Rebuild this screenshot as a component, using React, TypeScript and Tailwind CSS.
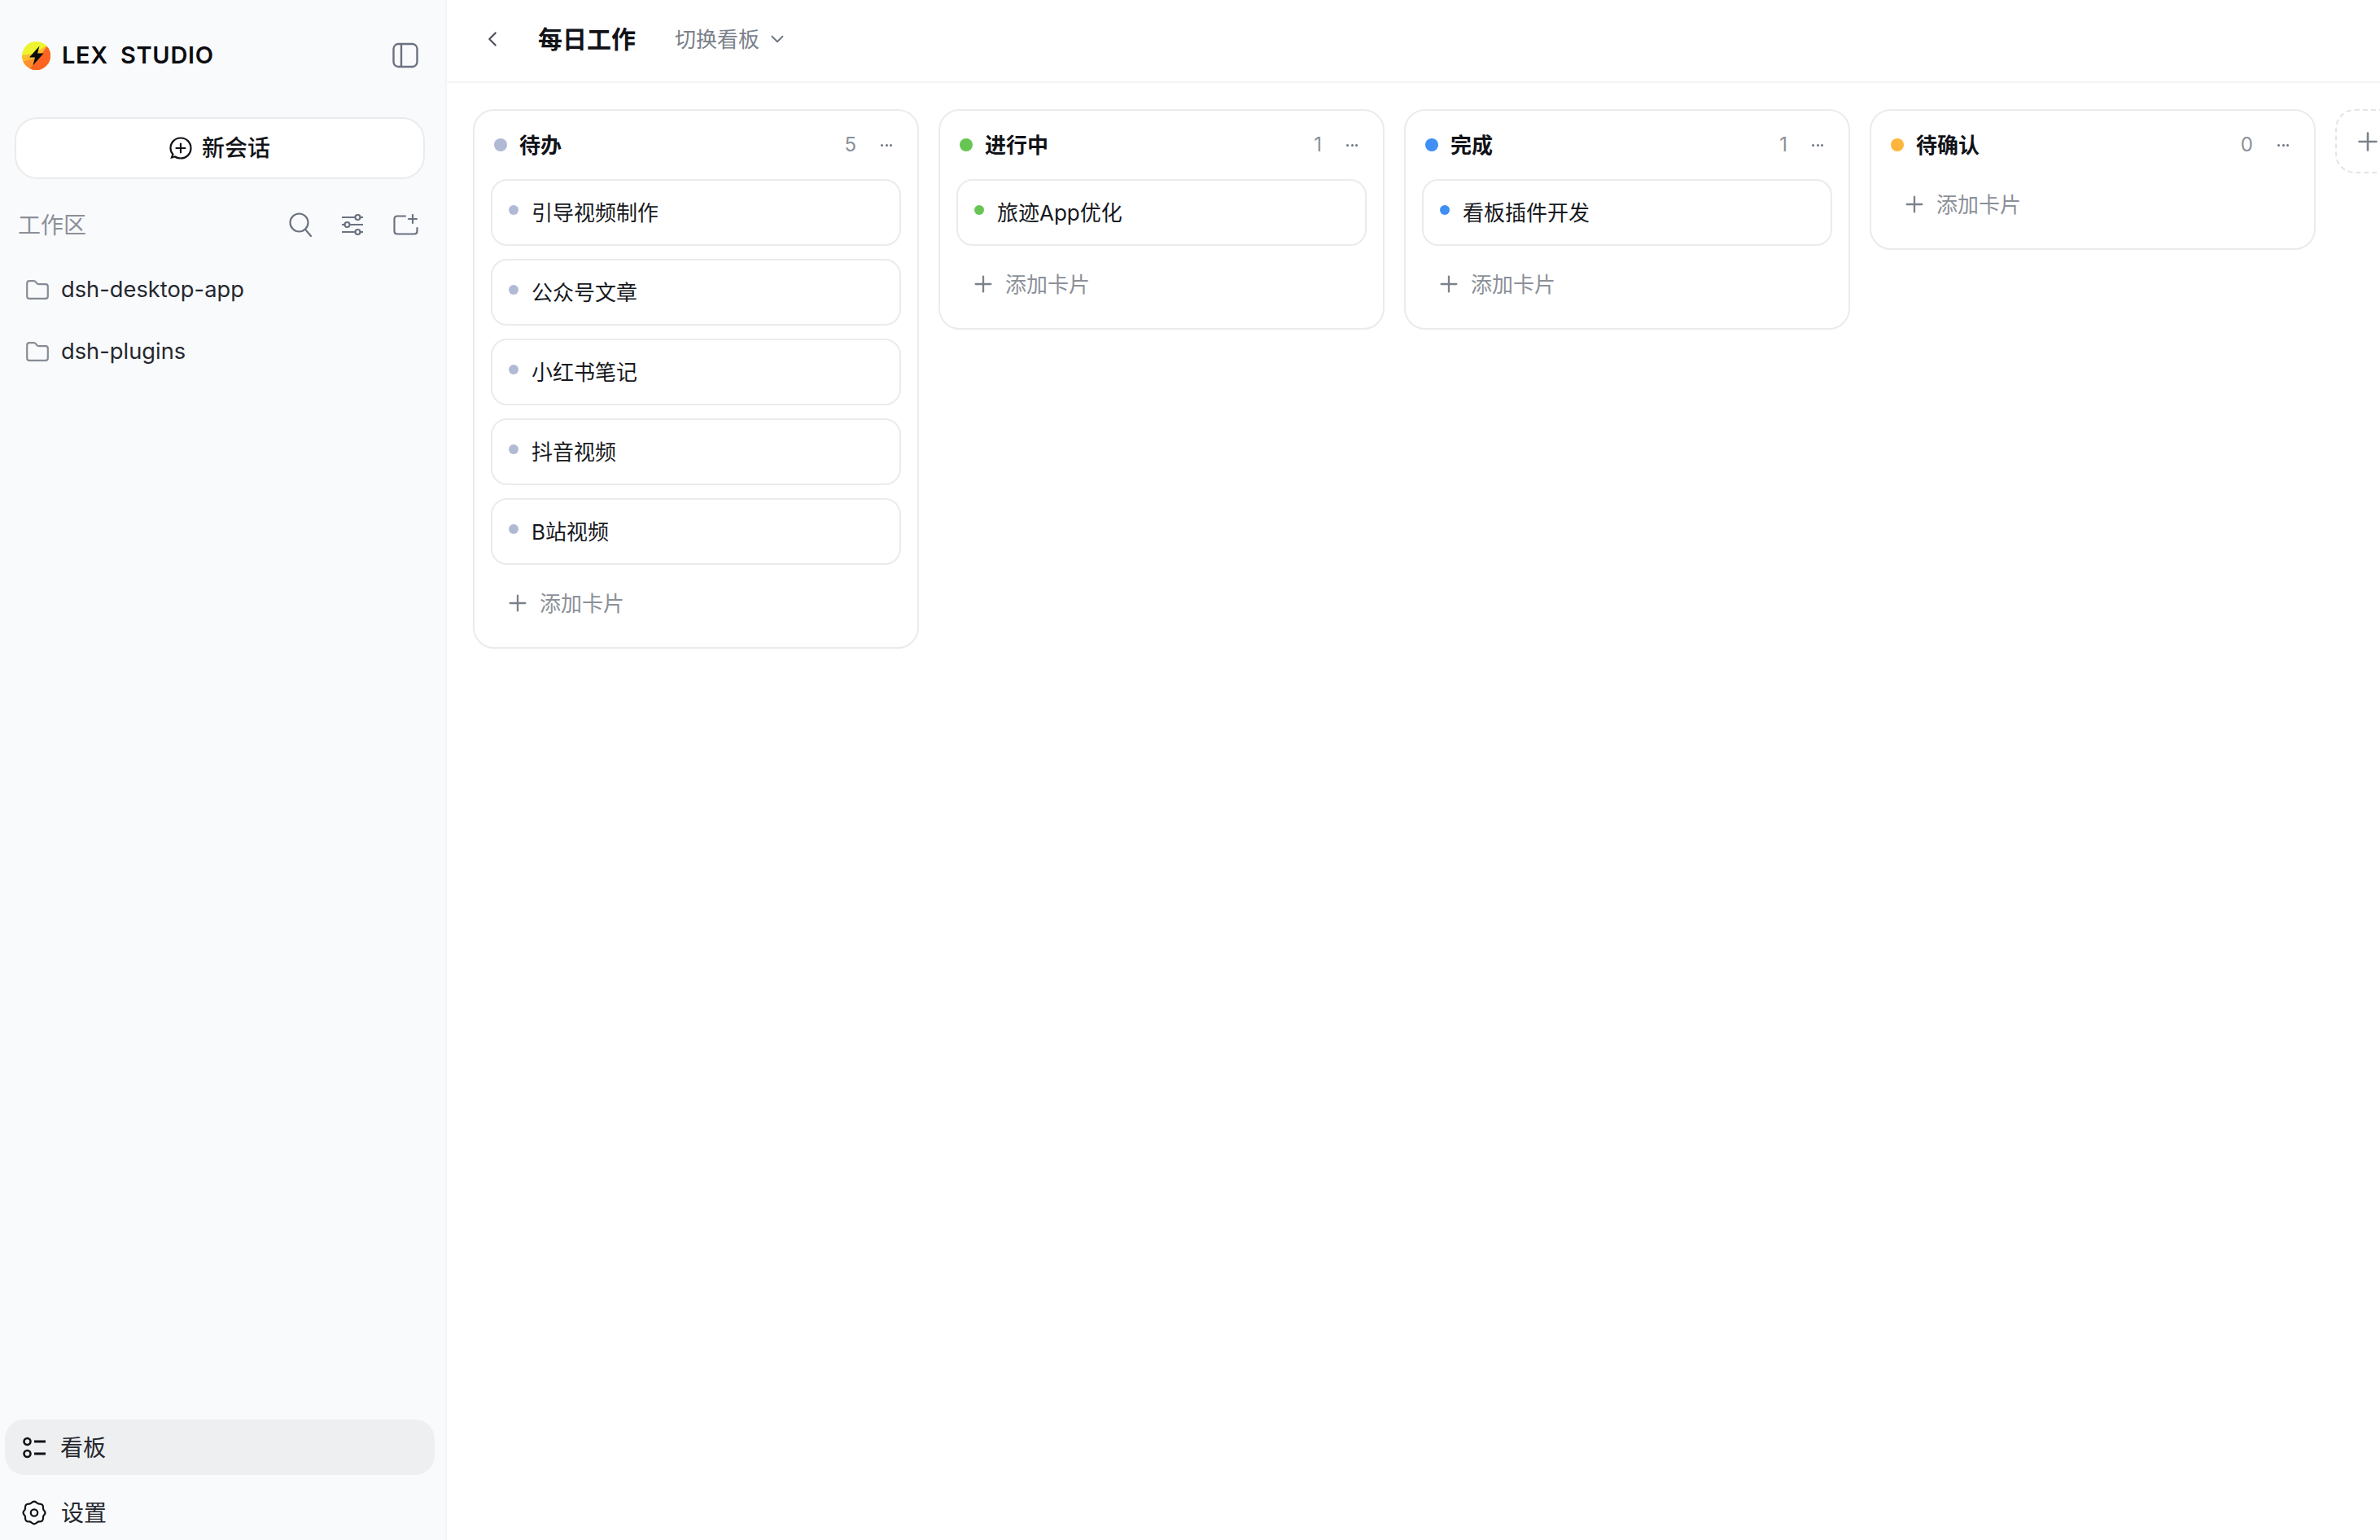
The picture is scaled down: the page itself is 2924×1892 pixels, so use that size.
import { ChevronDown, ChevronLeft, Plus } from "lucide-react";

interface Board {
  title: string;
  count: number;
  dot: string;
  cards: string[];
}

const boards: Board[] = [
  {
    title: "待办",
    count: 5,
    dot: "bg-[#b0bad4]",
    cards: ["引导视频制作", "公众号文章", "小红书笔记", "抖音视频", "B站视频"],
  },
  { title: "进行中", count: 1, dot: "bg-[#67c554]", cards: ["旅迹App优化"] },
  { title: "完成", count: 1, dot: "bg-[#3f8ff5]", cards: ["看板插件开发"] },
  { title: "待确认", count: 0, dot: "bg-[#fdb63b]", cards: [] },
];

function Logo() {
  return (
    <svg width="35" height="35" viewBox="0 0 35 35" className="shrink-0">
      <defs>
        <clipPath id="logo-clip">
          <circle cx="17.5" cy="17.5" r="17.5" />
        </clipPath>
      </defs>
      <g clipPath="url(#logo-clip)">
        <rect width="35" height="35" fill="#eef530" />
        <path d="M0 17 L14 15 L35 2 V35 H0 Z" fill="#fdbb2d" />
        <path d="M0 25 L16 21 L35 6 V35 H0 Z" fill="#fe8f2c" />
        <path d="M8 35 L18 25 L31 5 L35 8 V35 Z" fill="#fd6421" />
      </g>
      <path d="M21.5 5.5 L9 19.5 H16 L13.5 29.5 L26.5 14.5 H19 Z" fill="#0b0b0b" />
    </svg>
  );
}

function PanelIcon() {
  return (
    <svg width="32" height="32" viewBox="0 0 32 32" fill="none" stroke="#6b7280" strokeWidth="2.4">
      <rect x="1.5" y="2" width="29" height="28" rx="6" />
      <path d="M11 2 V30" />
    </svg>
  );
}

function NewChatIcon() {
  return (
    <svg width="28" height="28" viewBox="0 0 28 28" fill="none" stroke="#111318" strokeWidth="2.2" strokeLinecap="round">
      <path d="M7 24.5 C9 26 12 26.5 14 26.5 C21 26.5 26.5 21 26.5 14 C26.5 7 21 1.5 14 1.5 C7 1.5 1.5 7 1.5 14 C1.5 17 2.5 19.5 4.5 21.5 L3 25.5 L7 24.5" />
      <path d="M14 8.5 V19.5 M8.5 14 H19.5" />
    </svg>
  );
}

function SearchIcon() {
  return (
    <svg width="28" height="30" viewBox="0 0 28 30" fill="none" stroke="#6b7280" strokeWidth="2.2" strokeLinecap="round">
      <circle cx="12.5" cy="12.5" r="11" />
      <path d="M21 22 L27 29" />
    </svg>
  );
}

function SlidersIcon() {
  return (
    <svg width="26" height="26" viewBox="0 0 26 26" fill="none" stroke="#6b7280" strokeWidth="2.2" strokeLinecap="round">
      <path d="M0.5 4 H16 M22.5 4 H25.5 M0.5 13 H3.5 M10 13 H25.5 M0.5 22 H16 M22.5 22 H25.5" />
      <circle cx="19.5" cy="4" r="3" />
      <circle cx="6.5" cy="13" r="3" />
      <circle cx="19.5" cy="22" r="3" />
    </svg>
  );
}

function FolderPlusIcon() {
  return (
    <svg width="31" height="26" viewBox="0 0 31 26" fill="none" stroke="#6b7280" strokeWidth="2.2" strokeLinecap="round" strokeLinejoin="round">
      <path d="M15 2.5 H5 Q1.5 2.5 1.5 6 V21 Q1.5 24.5 5 24.5 H26 Q29.5 24.5 29.5 21 V17" />
      <path d="M24 1 V11 M19 6 H29" />
    </svg>
  );
}

function FolderIcon() {
  return (
    <svg width="28" height="24" viewBox="0 0 28 24" fill="none" stroke="#868c96" strokeWidth="2.2" strokeLinejoin="round" className="shrink-0">
      <path d="M1.2 4 Q1.2 1.2 4 1.2 H9.5 Q11 1.2 12 2.4 L13.5 4.2 Q14.5 5.2 16 5.2 H24 Q26.8 5.2 26.8 8 V20 Q26.8 22.8 24 22.8 H4 Q1.2 22.8 1.2 20 Z" />
    </svg>
  );
}

function ListIcon() {
  return (
    <svg width="28" height="27" viewBox="0 0 28 27" fill="none" stroke="#111318" strokeWidth="2.6" className="shrink-0">
      <circle cx="5.5" cy="6" r="4" />
      <circle cx="5.5" cy="21" r="4" />
      <path d="M14 6 H28 M14 21 H28" strokeWidth="3" />
    </svg>
  );
}

function GearIcon() {
  return (
    <svg width="30" height="31" viewBox="0 0 30 31" fill="none" stroke="#111318" strokeWidth="2.2" strokeLinejoin="round" className="shrink-0">
      <path d="M11.5 3.5 Q15 0 18.5 3.5 Q19.8 4.8 21.5 4.6 Q26.3 4.6 26 9.5 Q25.8 11.2 27 12.5 Q30 15.5 27 18.5 Q25.8 19.8 26 21.5 Q26.3 26.4 21.5 26.4 Q19.8 26.2 18.5 27.5 Q15 31 11.5 27.5 Q10.2 26.2 8.5 26.4 Q3.7 26.4 4 21.5 Q4.2 19.8 3 18.5 Q0 15.5 3 12.5 Q4.2 11.2 4 9.5 Q3.7 4.6 8.5 4.6 Q10.2 4.8 11.5 3.5 Z" />
      <circle cx="15" cy="15.5" r="4.2" />
    </svg>
  );
}

function KanbanColumn({ board }: { board: Board }) {
  return (
    <div className="w-[548px] shrink-0 self-start rounded-[26px] border-2 border-[#ebebed] bg-white pb-[23px] pl-[20px] pr-[20px]">
      <div className="flex h-[84px] items-center pl-[4px] pr-[11px]">
        <span className={`h-[16px] w-[16px] rounded-full ${board.dot}`} />
        <span className="ml-[15px] text-[26px] font-semibold text-[#111318]">{board.title}</span>
        <span className="ml-auto text-[24px] text-[#8b9098]">{board.count}</span>
        <div className="ml-[30px] flex w-[14px] justify-between">
          <span className="h-[3px] w-[3px] rounded-full bg-[#6b7280]" />
          <span className="h-[3px] w-[3px] rounded-full bg-[#6b7280]" />
          <span className="h-[3px] w-[3px] rounded-full bg-[#6b7280]" />
        </div>
      </div>
      {board.cards.map((card) => (
        <div
          key={card}
          className="mb-4 flex h-[82px] items-start rounded-[20px] border-2 border-[#ebebed] bg-white px-[20px] py-[19px]"
        >
          <span className={`mt-[11px] h-[12px] w-[12px] shrink-0 rounded-full ${board.dot}`} />
          <span className="ml-[16px] text-[26px] leading-[41px] text-[#17191e]">{card}</span>
        </div>
      ))}
      <div className="flex h-[62px] items-center pl-[21px] text-[#8b9098]">
        <Plus size={32} strokeWidth={1.75} className="-ml-[4px] text-[#7b818b]" />
        <span className="ml-[11px] text-[26px]">添加卡片</span>
      </div>
    </div>
  );
}

export default function App() {
  return (
    <div className="flex h-screen w-screen overflow-hidden bg-white font-['Inter','Noto_Sans_CJK_SC',sans-serif]">
      <aside className="flex w-[549px] shrink-0 flex-col border-r-2 border-[#f3f4f6] bg-[#f9fafc]">
        <div className="mt-[51px] flex h-[34px] items-center justify-between pl-[27px] pr-[33px]">
          <div className="flex items-center gap-[14px]">
            <Logo />
            <span className="text-[29px] font-semibold tracking-[0.7px] text-[#0b0c10] [word-spacing:7px]">LEX STUDIO</span>
          </div>
          <PanelIcon />
        </div>

        <button className="ml-[18px] mr-[25px] mt-[59px] flex h-[76px] items-center justify-center gap-[12px] rounded-[28px] border-2 border-[#ebebed] bg-white text-[28px] font-medium text-[#111318]">
          <NewChatIcon />
          新会话
        </button>

        <div className="mt-[42px] flex h-[28px] items-center pl-[22px] pr-[33px]">
          <span className="pt-[2px] text-[28px] text-[#8b9098]">工作区</span>
          <div className="ml-auto flex items-center gap-[37px]">
            <SearchIcon />
            <SlidersIcon />
            <FolderPlusIcon />
          </div>
        </div>

        <div className="mt-[28px] flex flex-col pl-[32px]">
          <div className="flex h-[76px] items-center gap-[15px] text-[27.3px] text-[#25282e]">
            <FolderIcon />
            dsh-desktop-app
          </div>
          <div className="flex h-[76px] items-center gap-[15px] text-[27.3px] text-[#25282e]">
            <FolderIcon />
            dsh-plugins
          </div>
        </div>

        <div className="mt-auto flex flex-col pl-[6px] pr-[13px]">
          <div className="flex h-[68px] items-center gap-[18px] rounded-[24px] bg-[#eeeff1] pl-[22px] text-[28px] text-[#25282e]">
            <ListIcon />
            <span className="pt-[2px]">看板</span>
          </div>
          <div className="mt-[10px] flex h-[70px] items-center gap-[18px] pl-[21px] pt-[3px] text-[28px] text-[#25282e]">
            <GearIcon />
            设置
          </div>
        </div>
      </aside>

      <main className="flex min-w-0 flex-1 flex-col">
        <header className="flex h-[102px] shrink-0 items-center border-b-2 border-[#f3f4f6] pb-[4px] pl-[41px]">
          <ChevronLeft size={30} strokeWidth={1.7} className="text-[#4b5058]" />
          <h1 className="ml-[41px] text-[30px] font-semibold text-[#111318]">每日工作</h1>
          <span className="ml-[48px] text-[26px] text-[#7b818b]">切换看板</span>
          <ChevronDown size={26} strokeWidth={1.7} className="ml-[9px] text-[#6b7280]" />
        </header>

        <div className="flex flex-1 gap-[24px] overflow-hidden pl-[32px] pt-[32px]">
          {boards.map((board) => (
            <KanbanColumn key={board.title} board={board} />
          ))}
          <div className="flex h-[79px] w-[80px] shrink-0 items-center justify-center rounded-[24px] border-2 border-dashed border-[#e3e4e7]">
            <Plus size={36} strokeWidth={1.7} className="text-[#7b818b]" />
          </div>
        </div>
      </main>
    </div>
  );
}
